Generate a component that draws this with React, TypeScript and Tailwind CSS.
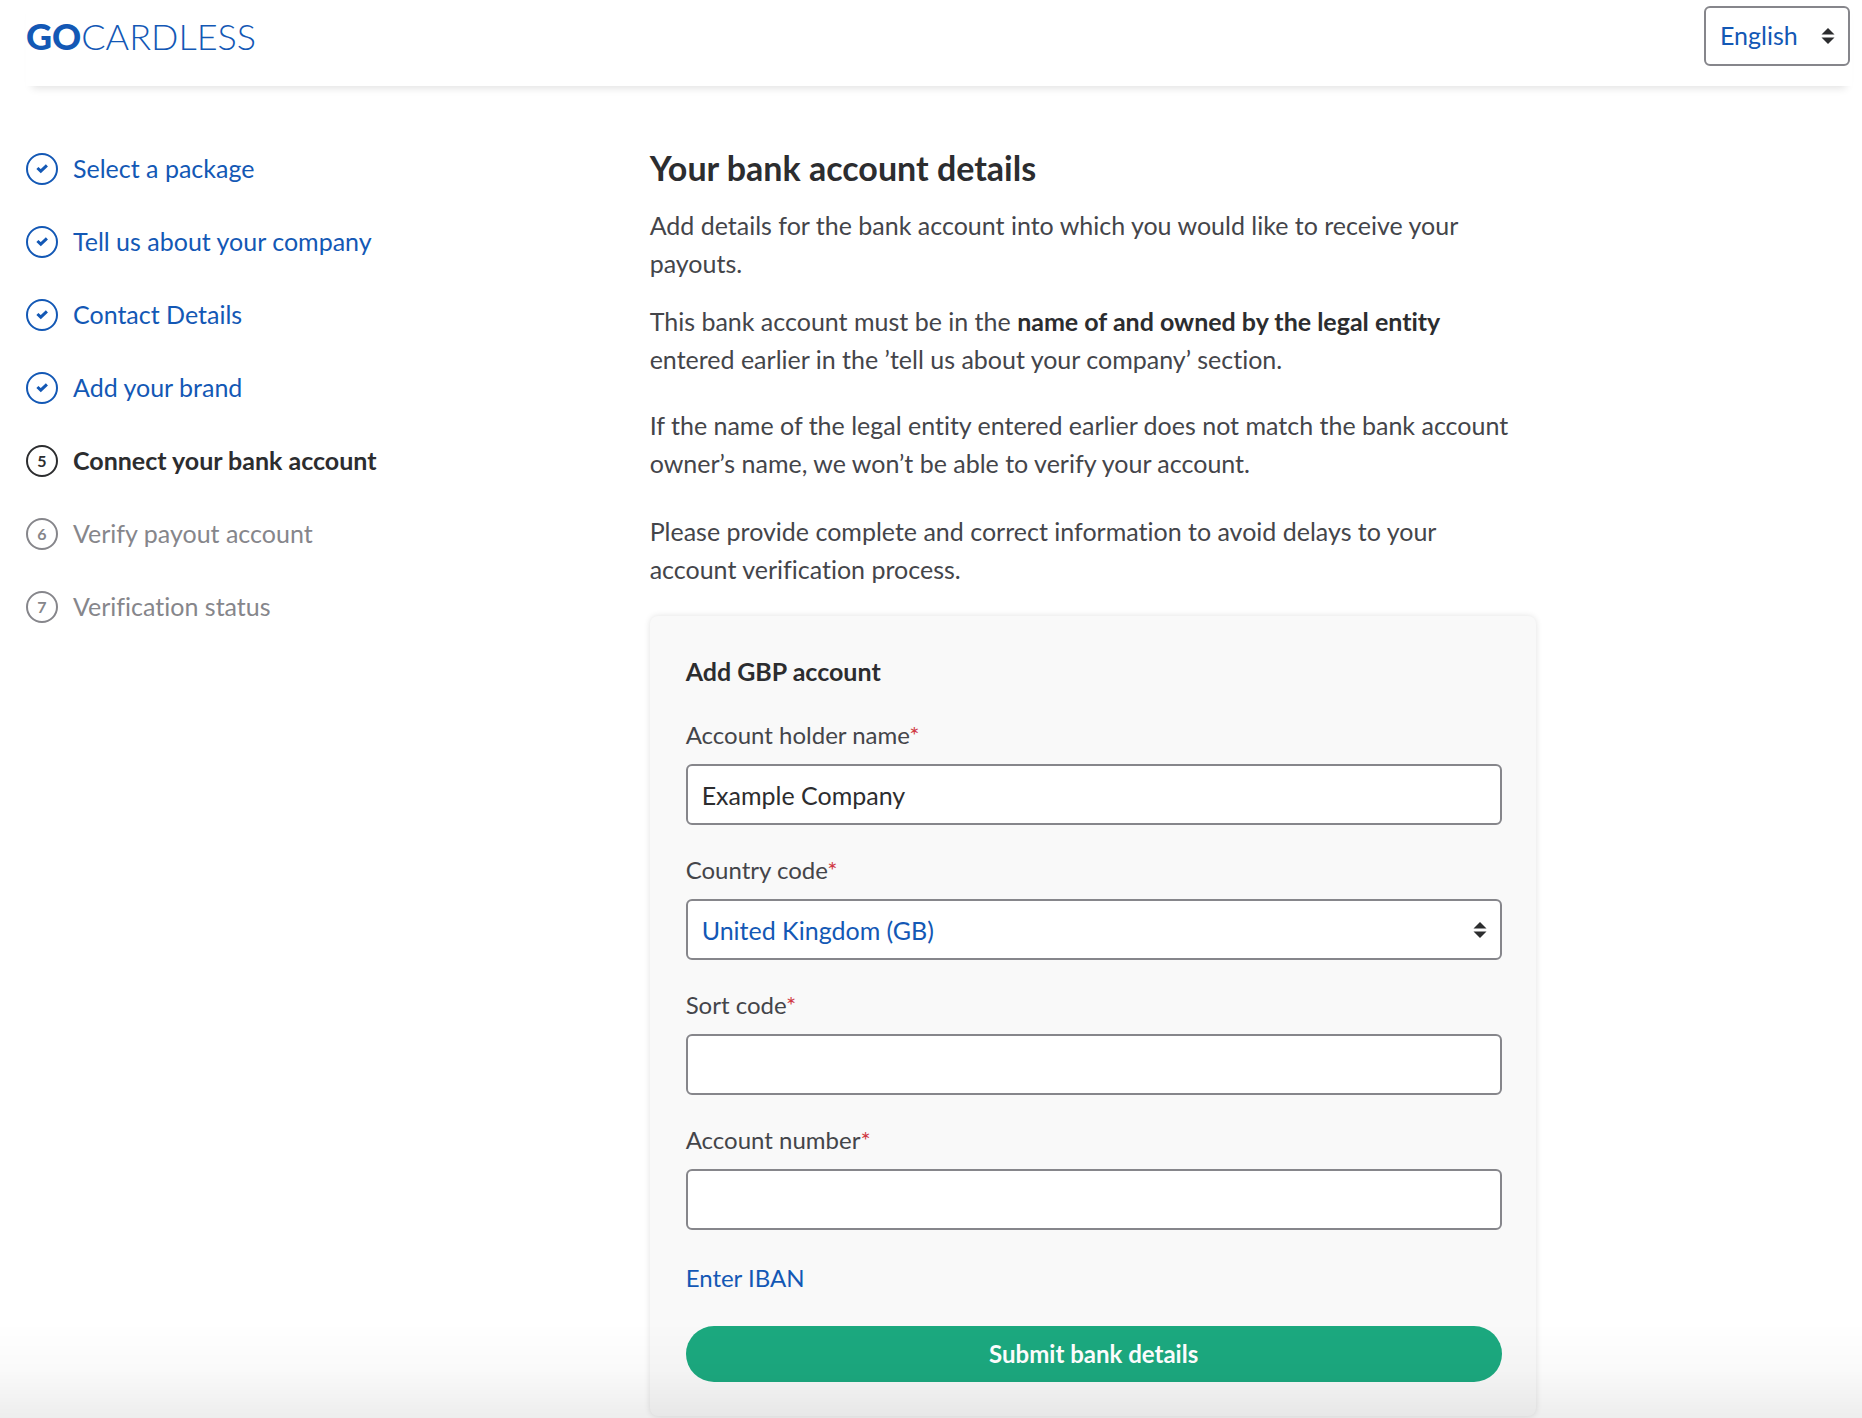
import React, { useState } from "react";

const steps = [
  { label: "Select a package", status: "done" },
  { label: "Tell us about your company", status: "done" },
  { label: "Contact Details", status: "done" },
  { label: "Add your brand", status: "done" },
  { label: "Connect your bank account", status: "current" },
  { label: "Verify payout account", status: "todo" },
  { label: "Verification status", status: "todo" },
];

const stepColors: Record<string, string> = {
  done: "text-[#1358b5]",
  current: "text-[#2c2d2f] font-bold",
  todo: "text-[#86868b]",
};

const fieldClass =
  "w-full h-[61px] rounded-md border-2 border-[#86868b] bg-white px-3.5 text-[25px] outline-none";

const SortArrows = () => (
  <svg
    className="pointer-events-none absolute right-[15px] top-1/2 -translate-y-1/2"
    width="14"
    height="18"
    viewBox="0 0 14 18"
    fill="#2c2d2f"
    aria-hidden="true"
  >
    <path d="M7 1l6.5 6.5H.5z" />
    <path d="M7 17l6.5-6.5H.5z" />
  </svg>
);

const Check = () => (
  <svg width="28" height="28" viewBox="2 2 28 28" fill="none" aria-hidden="true">
    <path d="M11.4 15l3.4 3.2 6.1-5.8" stroke="currentColor" strokeWidth="3" />
  </svg>
);

const Field = ({
  id,
  label,
  children,
}: {
  id: string;
  label: string;
  children: React.ReactNode;
}) => (
  <div className="mb-7">
    <label htmlFor={id} className="mb-3 block text-2xl leading-[34px]">
      {label}
      <span className="text-[#d03a44]">*</span>
    </label>
    {children}
  </div>
);

const Header = () => (
  <header className="flex h-[86px] items-start justify-between bg-white shadow-[0_8px_8px_-6px_rgba(0,0,0,0.12)]">
    <a href="#" className="mt-3 text-4xl leading-[48px] text-[#1358b5]">
      <span className="font-black">GO</span>
      <span className="font-light">CARDLESS</span>
    </a>
    <div className="relative mr-0.5 mt-1.5 w-[146px]">
      <select
        aria-label="Language"
        className="h-[60px] w-full appearance-none rounded-md border-2 border-[#86868b] bg-white px-3.5 text-[25px] text-[#1358b5] outline-none"
      >
        <option>English</option>
      </select>
      <SortArrows />
    </div>
  </header>
);

const Steps = () => (
  <nav className="w-1/3 shrink-0 pt-[67px]">
    <ol className="flex flex-col gap-[41px]">
      {steps.map((step, i) => (
        <li
          key={step.label}
          className={`flex h-8 items-center gap-[15px] text-[25px] ${stepColors[step.status]}`}
        >
          <span className="flex size-8 items-center justify-center rounded-full border-2 border-current text-base font-bold">
            {step.status === "done" ? <Check /> : i + 1}
          </span>
          {step.status === "done" ? <a href="#">{step.label}</a> : <span>{step.label}</span>}
        </li>
      ))}
    </ol>
  </nav>
);

const BankForm = () => {
  const [holder, setHolder] = useState("Example Company");
  const [sortCode, setSortCode] = useState("");
  const [accountNumber, setAccountNumber] = useState("");

  return (
    <form
      className="mt-7 rounded-lg bg-[#f9f9f9] pb-[34px] pl-9 pr-[34px] pt-9 shadow-[0_0_6px_rgba(0,0,0,0.12)]"
      onSubmit={(e) => e.preventDefault()}
    >
      <h2 className="mb-7 text-[25px] leading-[38px] font-bold text-[#2c2d2f]">
        Add GBP account
      </h2>
      <Field id="holder" label="Account holder name">
        <input
          id="holder"
          type="text"
          className={`${fieldClass} text-[#2c2d2f]`}
          value={holder}
          onChange={(e) => setHolder(e.target.value)}
        />
      </Field>
      <Field id="country" label="Country code">
        <div className="relative">
          <select id="country" className={`${fieldClass} appearance-none text-[#1358b5]`}>
            <option>United Kingdom (GB)</option>
          </select>
          <SortArrows />
        </div>
      </Field>
      <Field id="sort-code" label="Sort code">
        <input
          id="sort-code"
          type="text"
          className={fieldClass}
          value={sortCode}
          onChange={(e) => setSortCode(e.target.value)}
        />
      </Field>
      <Field id="account-number" label="Account number">
        <input
          id="account-number"
          type="text"
          className={fieldClass}
          value={accountNumber}
          onChange={(e) => setAccountNumber(e.target.value)}
        />
      </Field>
      <a href="#" className="mt-8 block w-fit text-2xl leading-8 text-[#1358b5]">
        Enter IBAN
      </a>
      <button
        type="submit"
        className="mt-8 h-14 w-full cursor-pointer rounded-full bg-[#1ca97f] text-2xl font-bold text-white"
      >
        Submit bank details
      </button>
    </form>
  );
};

const App = () => {
  return (
    <div className="relative min-h-screen bg-white pl-[26px] pr-2.5 font-['Lato',sans-serif] text-[#44454a] [font-variant-ligatures:none]">
      <Header />
      <div className="flex">
        <Steps />
        <main className="ml-[15px] max-w-[886px] flex-1 pt-[62px] text-[25px] leading-[38px]">
          <h1 className="mb-[18px] text-[34px] leading-10 font-bold text-[#2c2d2f]">
            Your bank account details
          </h1>
          <p className="mb-5 pr-3">
            Add details for the bank account into which you would like to receive your payouts.
          </p>
          <p className="mb-7 pr-3">
            This bank account must be in the{" "}
            <strong className="font-bold text-[#2c2d2f]">
              name of and owned by the legal entity
            </strong>{" "}
            entered earlier in the ’tell us about your company’ section.
          </p>
          <p className="mb-[30px] pr-3">
            If the name of the legal entity entered earlier does not match the bank account
            owner’s name, we won’t be able to verify your account.
          </p>
          <p className="pr-3">
            Please provide complete and correct information to avoid delays to your account
            verification process.
          </p>
          <BankForm />
        </main>
      </div>
      <div className="pointer-events-none fixed inset-x-0 bottom-0 h-24 bg-gradient-to-b from-transparent via-black/2 to-black/7" />
    </div>
  );
};

export default App;
